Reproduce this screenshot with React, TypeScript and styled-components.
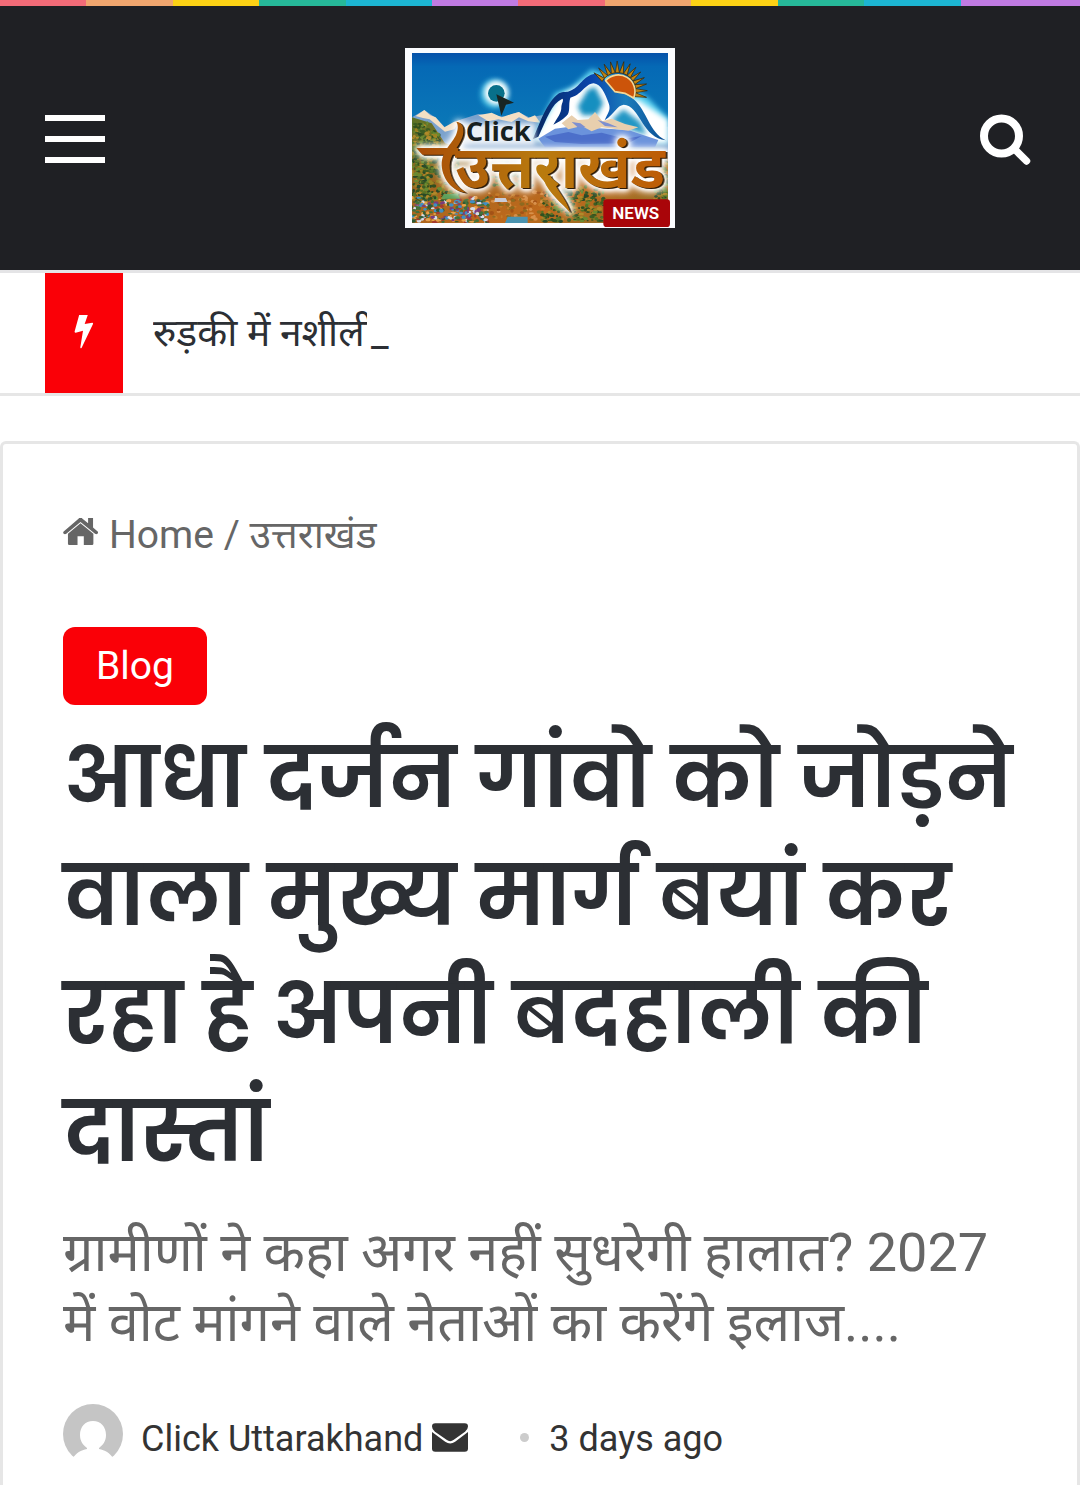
import React from "react";
import styled, { createGlobalStyle } from "styled-components";

const sans = `Roboto, "Noto Sans", "Noto Sans Devanagari", sans-serif`;

const GlobalStyle = createGlobalStyle`
  *, *::before, *::after { box-sizing: border-box; }
  body { margin: 0; background: #fff; color: #2c2f34; font-family: ${sans}; }
  a { color: inherit; text-decoration: none; }
  svg { display: block; flex: none; }
`;

const Rainbow = styled.div`
  height: 6px;
  background: linear-gradient(90deg,
    #f26b78 0 8%, #f0a66f 8% 16%, #fcd215 16% 24%, #26b899 24% 32%,
    #1cb5d2 32% 40%, #c07be2 40% 48%, #f26b78 48% 56%, #f0a66f 56% 64%,
    #fcd215 64% 72%, #26b899 72% 80%, #1cb5d2 80% 89%, #c07be2 89% 100%);
`;

const Header = styled.header`
  background: #1f2024;
  border-bottom: 3px solid #e4e4e6;
`;

const HeaderRow = styled.div`
  display: grid;
  grid-template-columns: 1fr auto 1fr;
  align-items: center;
  padding: 42px 45px;
`;

const IconButton = styled.button<{ $end?: boolean }>`
  justify-self: ${(p) => (p.$end ? "end" : "start")};
  padding: 2px 0 0;
  border: 0;
  background: none;
  color: #fff;
  cursor: pointer;
`;

const Bars = styled.span`
  display: flex;
  flex-direction: column;
  gap: 15px;
  width: 60px;
  &::before, &::after, span { content: ""; height: 6px; background: #fff; }
`;

const SearchSlot = styled.span`
  display: block;
  padding-right: 4px;
`;

const Ticker = styled.section`
  display: flex;
  align-items: stretch;
  gap: 30px;
  height: 123px;
  padding: 0 45px;
  border-bottom: 3px solid #e6e6e6;
`;

const TickerBadge = styled.div`
  display: flex;
  align-items: center;
  justify-content: center;
  width: 78px;
  background: #fa0007;
  color: #fff;
`;

const TickerText = styled.a`
  display: flex;
  align-items: center;
  gap: 4px;
  font-size: 39px;
  line-height: 60px;
`;

const Typed = styled.span`
  width: 214px;
  overflow: hidden;
  white-space: nowrap;
`;

const Card = styled.main`
  margin-top: 45px;
  padding: 60px 60px 24px;
  border: 3px solid #e6e6e6;
  border-bottom: 0;
  border-radius: 6px 6px 0 0;
`;

const Breadcrumb = styled.nav`
  display: flex;
  align-items: center;
  gap: 11px;
  font-size: 39px;
  line-height: 63px;
  color: #666;
`;

const Tag = styled.a`
  display: block;
  width: fit-content;
  margin-top: 60px;
  padding: 0 33px;
  border-radius: 12px;
  background: #fa0007;
  color: #fff;
  font-size: 39px;
  line-height: 78px;
`;

const Title = styled.h1`
  margin: 14px 0 0;
  font-family: Poppins, "Noto Sans", "Noto Sans Devanagari", sans-serif;
  font-size: 84px;
  font-weight: 600;
  line-height: 118px;
`;

const Subtitle = styled.h2`
  margin: 27px 0 0;
  font-size: 54px;
  font-weight: 400;
  line-height: 70px;
  color: #666;
`;

const Meta = styled.div`
  display: flex;
  align-items: center;
  margin-top: 46px;
  color: #333;
`;

const MetaDetails = styled.div`
  display: flex;
  align-items: center;
  margin: 6px 0 0 18px;
  font-size: 36px;
  line-height: 42px;
`;

const Author = styled.a`
  padding: 4px 9px 0 0;
`;

const Dot = styled.span`
  width: 9px;
  height: 9px;
  margin: 0 20px 0 52px;
  border-radius: 50%;
  background: #ccc;
`;

const Time = styled.time`
  padding-top: 4px;
`;

const SearchIcon = () => (
  <svg width="52" height="52" viewBox="0 0 52 52" fill="none" stroke="currentColor" aria-hidden="true">
    <circle cx="22.5" cy="23" r="17.5" strokeWidth="8" />
    <path d="M35 35.500 47.500 48" strokeWidth="7.4" strokeLinecap="round" />
  </svg>
);

const BoltIcon = () => (
  <svg width="20" height="36" viewBox="222 164 60 108" fill="currentColor" aria-hidden="true">
    <path d="M238 162H264L254 191 277 187Q280 187 279 191L245 262Q241 266 241 261L249 211 227 217Q223 217 224 213Z" />
  </svg>
);

const HomeIcon = () => (
  <svg width="35" height="35" viewBox="69 53 106 106" fill="currentColor" aria-hidden="true">
    <path d="M122 52Q125 52 128 55L145 69V53H160V82L174 94Q177 97 173 101 170 104 166 101L122 65 79 101Q75 104 71 101 68 97 71 94L116 55Q119 52 122 52Z" />
    <path d="M122 69 161 101V131Q161 135 157 135H132V108H113V135H88Q84 135 84 131V101Z" />
  </svg>
);

const MailIcon = () => (
  <svg width="36" height="29" viewBox="96 98 109 87" fill="currentColor" aria-hidden="true">
    <path d="M106 98H195Q205 98 205 108 205 116 196 124L162 148Q151 157 140 148L105 124Q96 117 96 108 96 98 106 98Z" />
    <path d="M96 125 136 154Q151 165 166 154L205 125V175Q205 185 195 185H106Q96 185 96 175Z" />
  </svg>
);

const Avatar = () => (
  <svg width="60" height="60" viewBox="0 0 60 60" role="img" aria-label="Photo of Click Uttarakhand">
    <circle cx="30" cy="30" r="30" fill="#c5c5c5" />
    <path fill="#fff" d="M30 17C38 17 43 23 43 31 43 37 40 41 36 44V45C42 46 47 49 50 54L56 62H4L10 54C13 49 18 46 24 45V44C20 41 17 37 17 31 17 23 22 17 30 17Z" />
  </svg>
);

const foliage = ["#31501f", "#557326", "#9a8322", "#284a28", "#b18a2a", "#6a8a31", "#3d5c22"];
const town = ["#d7dce8", "#a63a2e", "#3e8fc4", "#e8a04a", "#43713a", "#7a3c7c", "#2f5a34"];
const earth = ["#c47a28", "#a35216", "#d8904a", "#8d6a20"];

const noise = (n: number) => {
  const v = Math.sin(n * 12.9898) * 43758.5453;
  return v - Math.floor(v);
};

type PatchProps = { seed: number; count: number; x: number; y: number; w: number; h: number; colours: string[] };

const Patch = ({ seed, count, x, y, w, h, colours }: PatchProps) => (
  <g>
    {Array.from({ length: count }, (_, i) => {
      const n = seed + i * 5;
      return (
        <ellipse
          key={i}
          cx={Math.round(x + noise(n) * w)}
          cy={Math.round(y + noise(n + 1) * h)}
          rx={Math.round(3 + noise(n + 2) * 5)}
          ry={Math.round(2 + noise(n + 3) * 4)}
          fill={colours[Math.floor(noise(n + 4) * colours.length)]}
        />
      );
    })}
  </g>
);

const rays = Array.from({ length: 13 }, (_, i) => -143 + i * 13);

const Lettering = styled.text`
  font: 700 180px "Noto Sans", "Noto Sans Devanagari", sans-serif;
`;

const Embossed = styled.g`
  filter: drop-shadow(5px 3px 0 #2d1a06) drop-shadow(0 0 7px #fff) drop-shadow(0 0 9px #fff) drop-shadow(0 0 10px #fff);
`;

const LogoClick = styled.text`
  font: 700 82px "Open Sans", sans-serif;
`;

const LogoNews = styled.text`
  font: 600 51px Roboto, sans-serif;
`;

const Logo = () => (
  <svg width="270" height="180" viewBox="30 24 810 540" role="img" aria-label="Click Uttarakhand News">
    <defs>
      <linearGradient id="sky" x1="0" y1="0" x2="0" y2="1">
        <stop offset="0" stopColor="#0551aa" />
        <stop offset="0.15" stopColor="#0569b5" />
        <stop offset="1" stopColor="#0c7cb8" />
      </linearGradient>
      <linearGradient id="ground" x1="0" y1="0" x2="1" y2="1">
        <stop offset="0" stopColor="#5b7226" />
        <stop offset="0.4" stopColor="#a4661f" />
        <stop offset="0.7" stopColor="#c0691c" />
        <stop offset="1" stopColor="#77712b" />
      </linearGradient>
      <linearGradient id="gold" gradientUnits="userSpaceOnUse" x1="70" y1="0" x2="810" y2="0">
        <stop offset="0" stopColor="#a84d08" />
        <stop offset="0.5" stopColor="#b97b0e" />
        <stop offset="1" stopColor="#bd5b06" />
      </linearGradient>
      <linearGradient id="peak" x1="0" y1="0" x2="1" y2="0">
        <stop offset="0" stopColor="#06265f" />
        <stop offset="0.45" stopColor="#0a46ad" />
        <stop offset="0.7" stopColor="#1b7dbb" />
        <stop offset="1" stopColor="#0a4c93" />
      </linearGradient>
      <filter id="glow" x="-30%" y="-30%" width="160%" height="160%">
        <feGaussianBlur stdDeviation="8" />
      </filter>
      <clipPath id="frame"><rect x="51" y="39" width="768" height="510" /></clipPath>
    </defs>
    <rect x="30" y="24" width="810" height="540" fill="#fbfcff" />
    <g clipPath="url(#frame)">
      <rect x="51" y="39" width="768" height="270" fill="url(#sky)" />
      <path fill="#7ba2cd" d="M51 232 88 210 120 232 150 262 200 238 250 222 330 230 370 216 402 232 450 224 520 250 819 260V380H51Z" />
      <path fill="#f3dfc4" d="M62 228 88 210 106 226 122 232 148 262 176 246 196 240 178 268 150 275 124 254 104 238 84 234ZM250 226 290 218 320 232 350 222 372 216 400 234 420 226 436 248 400 244 372 232 350 246 310 238 280 244Z" />
      <path fill="url(#ground)" d="M51 232 110 250 150 310 250 340 450 350 819 350V549H51Z" />
      <Patch seed={3} count={240} x={51} y={250} w={55} h={230} colours={foliage} />
      <Patch seed={9001} count={110} x={90} y={275} w={45} h={80} colours={foliage} />
      <Patch seed={1009} count={220} x={80} y={325} w={110} h={150} colours={foliage} />
      <Patch seed={2011} count={150} x={290} y={350} w={120} h={90} colours={foliage} />
      <Patch seed={3001} count={100} x={780} y={350} w={40} h={130} colours={foliage} />
      <Patch seed={4001} count={260} x={440} y={440} w={190} h={105} colours={foliage} />
      <Patch seed={5003} count={260} x={51} y={472} w={230} h={75} colours={town} />
      <Patch seed={6007} count={90} x={280} y={455} w={180} h={85} colours={earth} />
      <path fill="#4a93b0" d="M338 530H398V549H330Z" />
      <path fill="#5ea05a" d="M146 462H188L196 476H140Z" />
      <path fill="#c9ccd8" d="M300 474H332L338 486H298Z" />

      <path fill="#5bd2f0" filter="url(#glow)" d="M410 298 480 160 530 142 590 88 650 110 760 175 819 235V310Z" />
      <path fill="#fff" filter="url(#glow)" d="M415 300 490 170 595 110 660 170 730 180 819 240V310L500 320Z" />
      <path fill="#178fc0" filter="url(#glow)" d="M548 200 578 150 600 140 625 190 606 225 562 226Z" />
      <path fill="#2496c4" filter="url(#glow)" d="M650 240 685 208 735 245 755 285 680 260Z" />
      <path fill="#6b93dc" d="M430 296 480 266 540 258 600 264 700 270 760 290 790 300 780 322 450 322Z" />
      <path fill="#e8cfae" d="M500 250 530 226 548 240 580 238 600 216 622 244 650 236 690 252 730 262 700 272 620 262 590 274 560 258 520 268Z" />
      <path fill="#7d8fd0" d="M530 246 556 250 572 262 548 262ZM608 240 640 250 668 262 630 258Z" />
      <path fill="#4c6fca" d="M450 290 520 276 560 286 620 278 690 296 740 288 700 310 560 312 480 306Z" />

      <path fill="url(#peak)" d="M413 298C435 250 455 185 492 160 505 154 514 158 522 154 556 142 564 106 600 101 622 103 632 122 642 136 663 165 690 153 716 178 756 212 762 277 812 301 778 296 759 274 744 251 724 219 710 194 686 194 665 197 661 219 629 241 637 221 649 211 641 190 630 160 618 132 596 130 569 132 560 166 526 173 519 194 528 216 514 228 500 242 488 248 475 254 487 232 500 219 499 200 501 187 507 180 502 176 468 192 457 235 430 290Z" />
      <g fill="#c08412" stroke="#342408" strokeWidth="2">
        {rays.map((a) => (
          <path key={a} d="M54-6 89 0 54 6Z" transform={`translate(668 152) rotate(${a})`} />
        ))}
      </g>
      <path d="M632 122A50 50 0 0 1 716 174L690 160 660 155Z" fill="#cc540a" stroke="#f5d795" strokeWidth="5" />

      <ellipse cx="298" cy="162" rx="42" ry="44" fill="#35b4dd" filter="url(#glow)" />
      <circle cx="304" cy="158" r="36" fill="#fff" filter="url(#glow)" />
      <circle cx="304" cy="160" r="25" fill="#08708a" />
      <path d="M304 163 357 188 333 194 319 227Z" fill="#182523" />

      <rect x="205" y="250" width="215" height="66" fill="#fff" opacity="0.85" filter="url(#glow)" />

      <Embossed fill="url(#gold)">
        <path d="M64 324H190V344H82Z" />
        <path d="M184 245C204 247 210 268 202 292 192 320 164 346 164 376 163 408 180 440 214 458 174 456 142 418 140 376 139 334 172 310 183 285 190 268 190 254 184 245Z" />
        <path d="M446 420 466 405C480 446 514 474 526 518 500 488 462 462 446 420Z" />
        <Lettering x="180" y="444">उत्तराखंड</Lettering>
      </Embossed>
      <LogoClick x="212" y="303" fill="#17201f">Click</LogoClick>
    </g>
    <rect x="625" y="478" width="200" height="83" rx="10" fill="#a90509" />
    <LogoNews x="652" y="537" fill="#fff">NEWS</LogoNews>
  </svg>
);

export default function App() {
  return (
    <>
      <GlobalStyle />
      <Header>
        <Rainbow />
        <HeaderRow>
          <IconButton aria-label="Menu"><Bars><span /></Bars></IconButton>
          <a href="#home" aria-label="Click Uttarakhand"><Logo /></a>
          <IconButton $end aria-label="Search"><SearchSlot><SearchIcon /></SearchSlot></IconButton>
        </HeaderRow>
      </Header>
      <Ticker aria-label="Breaking news">
        <TickerBadge><BoltIcon /></TickerBadge>
        <TickerText href="#breaking"><Typed>रुड़की में नशीली</Typed>_</TickerText>
      </Ticker>
      <Card>
        <Breadcrumb aria-label="Breadcrumb">
          <HomeIcon />
          <span><a href="#home">Home</a> / <a href="#uttarakhand">उत्तराखंड</a></span>
        </Breadcrumb>
        <Tag href="#blog">Blog</Tag>
        <Title>आधा दर्जन गांवो को जोड़ने वाला मुख्य मार्ग बयां कर रहा है अपनी बदहाली की दास्तां</Title>
        <Subtitle>ग्रामीणों ने कहा अगर नहीं सुधरेगी हालात? 2027 में वोट मांगने वाले नेताओं का करेंगे इलाज....</Subtitle>
        <Meta>
          <Avatar />
          <MetaDetails>
            <Author href="#author">Click Uttarakhand</Author>
            <a href="#mail" aria-label="Send an email"><MailIcon /></a>
            <Dot />
            <Time>3 days ago</Time>
          </MetaDetails>
        </Meta>
      </Card>
    </>
  );
}
